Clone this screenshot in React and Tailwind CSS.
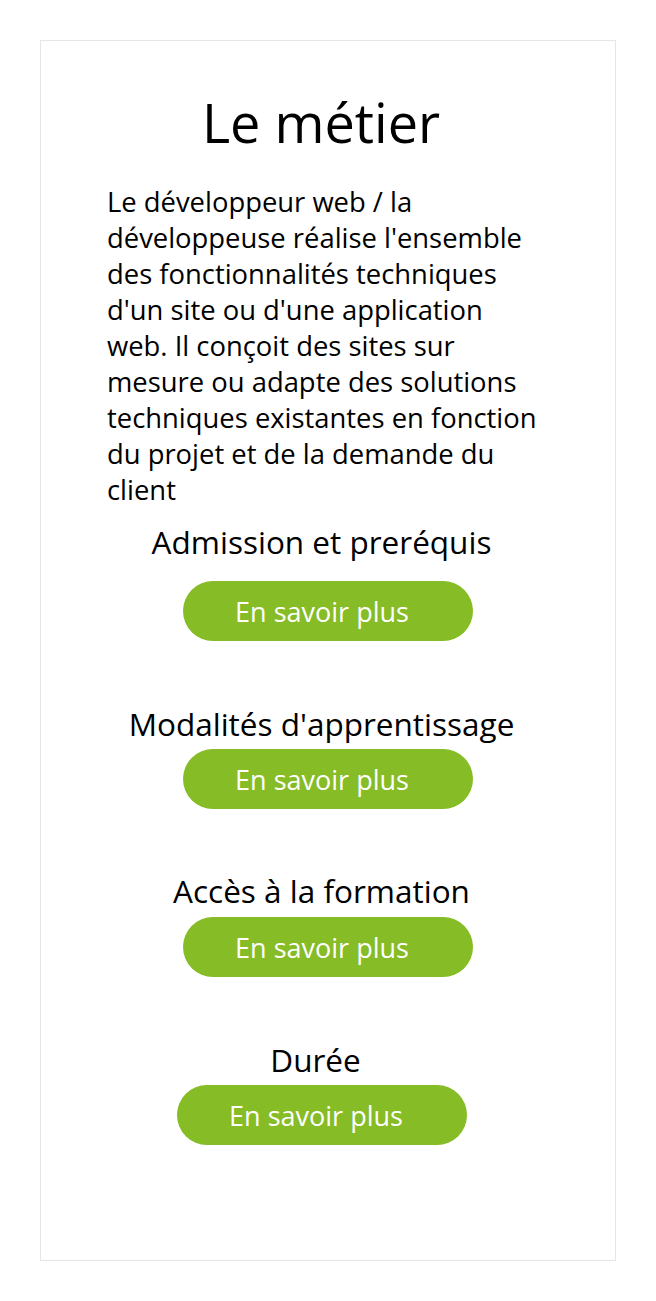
export default function App() {
  const sections = [
    { title: 'Admission et prer\u00e9quis', wrap: 'mt-[14px]', btn: 'mt-[19px]' },
    { title: "Modalit\u00e9s d'apprentissage", wrap: 'mt-[63px]', btn: 'mt-[5px]' },
    { title: 'Acc\u00e8s \u00e0 la formation', wrap: 'mt-[62px]', btn: 'mt-[6px]' },
    { title: 'Dur\u00e9e', wrap: 'mt-[63px] pr-[12px]', btn: 'mt-[5px]' },
  ];

  return (
    <div className="min-h-screen bg-white p-[40px] font-['Open_Sans',sans-serif] text-black">
      <div className="border border-[#e6e6e6] h-[1221px] flex flex-col items-center pt-[45px]">
        <h1 className="mr-[14px] text-[54px] leading-[72px] font-normal">Le m&eacute;tier</h1>
        <p className="mt-[26px] self-start ml-[66px] w-[440px] text-[27.4px] leading-[36px]">
          Le d&eacute;veloppeur web / la d&eacute;veloppeuse r&eacute;alise l'ensemble des
          fonctionnalit&eacute;s techniques d'un site ou d'une application web. Il con&ccedil;oit
          des sites sur mesure ou adapte des solutions techniques existantes en fonction du
          projet et de la demande du client
        </p>
        {sections.map((s, i) => (
          <div key={i} className={`flex flex-col items-center ${s.wrap}`}>
            <h2 className="mr-[13px] text-[31.5px] leading-[40px] font-normal whitespace-nowrap">{s.title}</h2>
            <button className={`${s.btn} w-[290px] h-[60px] rounded-full bg-[#86bc25] pr-[12px] text-white text-[27px] leading-none`}>
              En savoir plus
            </button>
          </div>
        ))}
      </div>
    </div>
  );
}
